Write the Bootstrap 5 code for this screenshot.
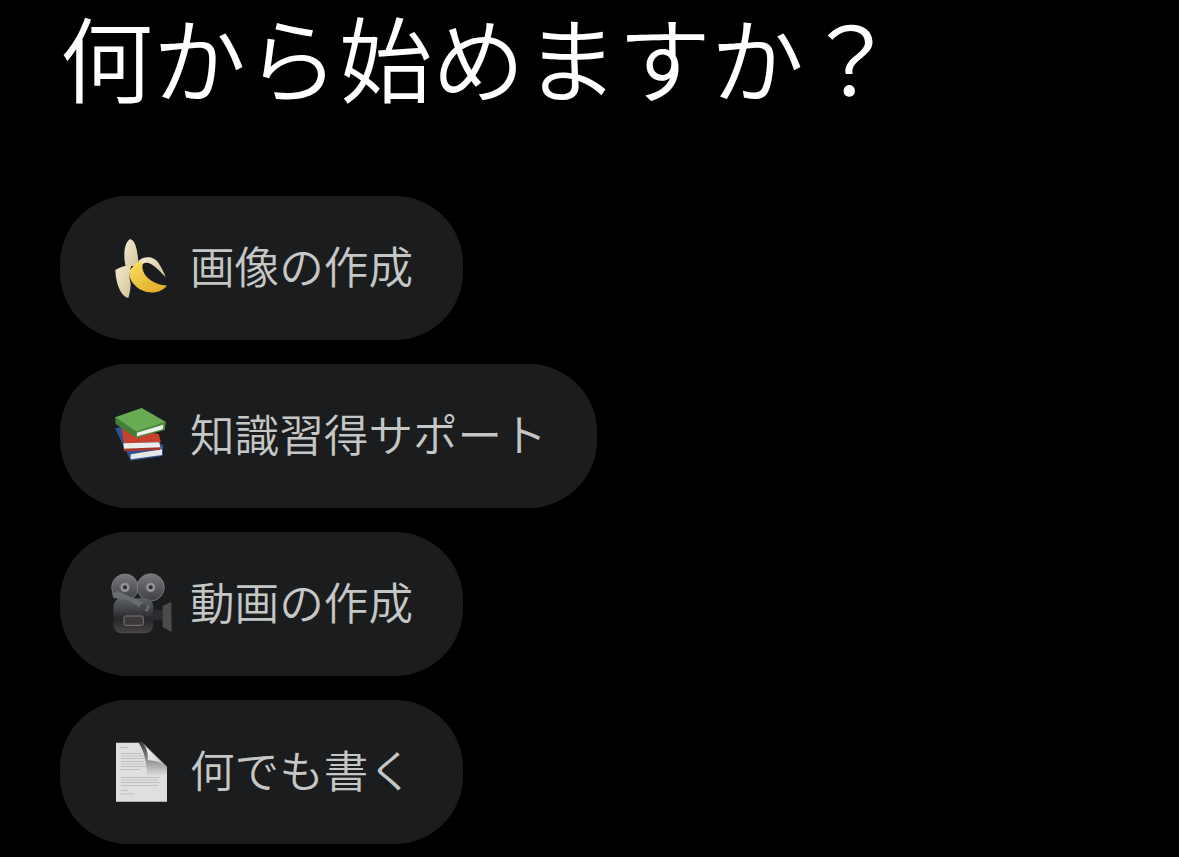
<!DOCTYPE html>
<html lang="ja">
  <head>
    <meta charset="UTF-8" />
    <meta name="viewport" content="width=device-width, initial-scale=1.0" />
    <title>何から始めますか？</title>
    <link
      href="https://cdn.jsdelivr.net/npm/bootstrap@5.3.1/dist/css/bootstrap.min.css"
      rel="stylesheet"
    />
    <style>
      body {
        background: #000;
        font-family: "Noto Sans CJK JP", "Noto Sans", sans-serif;
      }
      .start-page {
        padding-left: 60px;
      }
      .start-title {
        color: #fff;
        font-size: 93px;
        font-weight: 350;
        line-height: 112px;
        margin: 0 0 84px 0;
      }
      .start-list {
        gap: 24px;
      }
      .start-chip {
        height: 144px;
        padding: 0 50px 0 48px;
        gap: 18px;
        background: #1b1c1e;
        color: #c4c7c5;
        border: 0;
        border-radius: 68px;
        font-size: 44.6px;
        font-weight: 350;
        line-height: 1;
      }
      .chip-label {
        margin-bottom: 6px;
      }
      .chip-icon {
        width: 64px;
        height: 64px;
        flex: none;
        filter: blur(0.4px);
      }
    </style>
    <script src="https://cdn.jsdelivr.net/npm/bootstrap@5.3.1/dist/js/bootstrap.bundle.min.js"></script>
  </head>
  <body>
    <div class="start-page">
      <h1 class="start-title">何から始めますか？</h1>
      <div class="start-list d-flex flex-column align-items-start">
        <button type="button" class="start-chip d-inline-flex align-items-center">
          <svg class="chip-icon" viewBox="144 138 192 192" aria-hidden="true">
            <defs>
              <linearGradient id="peelA" x1="0" y1="0" x2="1" y2="1">
                <stop offset="0" stop-color="#f4ecd2" />
                <stop offset="1" stop-color="#d2c296" />
              </linearGradient>
              <linearGradient id="flesh" x1="0" y1="0" x2="0.7" y2="1">
                <stop offset="0" stop-color="#f9e060" />
                <stop offset="1" stop-color="#e3ad2c" />
              </linearGradient>
            </defs>
            <path d="M210 147C224 150 230 172 233 196L237 226L197 230C190 198 191 160 210 147Z" fill="url(#peelA)" />
            <path d="M236 212C254 197 282 198 296 220C306 235 313 250 317 262C304 248 284 226 266 219C254 215 246 224 238 228Z" fill="url(#peelA)" />
            <path d="M222 226C236 210 252 212 247 232C250 262 282 284 321 287C310 303 276 316 246 301C224 290 204 268 208 242Z" fill="url(#flesh)" />
            <path d="M166 240C184 229 204 225 214 227C208 244 206 262 212 280C212 296 209 312 205 324C188 322 168 292 166 240Z" fill="url(#peelA)" />
          </svg>
          <span class="chip-label">画像の作成</span>
        </button>
        <button type="button" class="start-chip d-inline-flex align-items-center">
          <svg class="chip-icon" viewBox="144 132 192 192" aria-hidden="true">
            <path d="M165 205L185 200L310 255L308 288L212 302Z" fill="#33508f" />
            <path d="M212 283L306 268L306 285L212 298Z" fill="#e4e6e8" />
            <path d="M185 205L296 222L303 246L192 250Z" fill="#c9402c" />
            <path d="M190 250L298 247L302 266L192 270Z" fill="#eceded" />
            <path d="M190 266L302 262L300 270L192 274Z" fill="#a8352a" />
            <path d="M165 172L245 144L318 186L228 216Z" fill="#69ab52" />
            <path d="M165 172L228 214L228 234L167 192Z" fill="#427f38" />
            <path d="M228 214L318 186L314 210L228 234Z" fill="#4d8c40" />
            <path d="M231 218L310 194L308 208L231 229Z" fill="#f0f1ee" />
          </svg>
          <span class="chip-label">知識習得サポート</span>
        </button>
        <button type="button" class="start-chip d-inline-flex align-items-center">
          <svg class="chip-icon" viewBox="144 126 192 192" aria-hidden="true">
            <defs>
              <linearGradient id="reel" x1="0" y1="0" x2="0" y2="1">
                <stop offset="0" stop-color="#77797b" />
                <stop offset="1" stop-color="#3d3f42" />
              </linearGradient>
              <linearGradient id="camBody" x1="0" y1="0" x2="0" y2="1">
                <stop offset="0" stop-color="#5f6267" />
                <stop offset="0.6" stop-color="#26272a" />
                <stop offset="1" stop-color="#4a4443" />
              </linearGradient>
            </defs>
            <circle cx="195" cy="172" r="40" fill="url(#reel)" stroke="#8a8c8e" stroke-width="2" />
            <circle cx="272" cy="172" r="41" fill="url(#reel)" stroke="#8a8c8e" stroke-width="2" />
            <circle cx="195" cy="172" r="14" fill="#8f9193" />
            <circle cx="195" cy="172" r="6" fill="#2a2b2d" />
            <circle cx="272" cy="172" r="14" fill="#8f9193" />
            <circle cx="272" cy="172" r="6" fill="#2a2b2d" />
            <rect x="160" y="205" width="120" height="105" rx="24" fill="url(#camBody)" />
            <path d="M156 190L172 182L270 228L262 246L200 208L160 204Z" fill="#6a6c70" />
            <circle cx="250" cy="231" r="10" fill="#46484b" />
            <rect x="192" y="258" width="58" height="28" rx="5" fill="#3c3a3a" stroke="#7c7877" stroke-width="3" />
            <rect x="278" y="240" width="34" height="30" rx="6" fill="#2b2c2e" />
            <path d="M308 228L334 215L335 306L308 292Z" fill="#4b4b4d" />
          </svg>
          <span class="chip-label">動画の作成</span>
        </button>
        <button type="button" class="start-chip d-inline-flex align-items-center">
          <svg class="chip-icon" viewBox="144 129 192 192" aria-hidden="true">
            <defs>
              <linearGradient id="foldShade" x1="0" y1="0" x2="0" y2="1">
                <stop offset="0" stop-color="#3a3a3a" />
                <stop offset="1" stop-color="#dedede" />
              </linearGradient>
              <linearGradient id="foldEdge" x1="0" y1="0" x2="1" y2="1">
                <stop offset="0" stop-color="#fdfdfd" />
                <stop offset="1" stop-color="#c9c9c9" />
              </linearGradient>
            </defs>
            <path d="M168 137H248L321 210V314H168Z" fill="#dfdfdf" />
            <path d="M236 137H250L321 210V228C312 240 285 240 262 232C258 200 255 165 236 137Z" fill="url(#foldShade)" />
            <path d="M250 141L316 208C300 190 275 192 263 190C265 172 262 155 250 141Z" fill="url(#foldEdge)" />
            <g fill="#b0b0b0">
              <rect x="182" y="151" width="24" height="2" />
              <rect x="182" y="168" width="62" height="2" />
              <rect x="182" y="176" width="68" height="2" />
              <rect x="182" y="184" width="72" height="2" />
              <rect x="182" y="192" width="70" height="2" />
              <rect x="182" y="200" width="74" height="2" />
              <rect x="182" y="208" width="76" height="2" />
              <rect x="182" y="216" width="60" height="2" />
              <rect x="182" y="240" width="118" height="2" />
              <rect x="182" y="248" width="112" height="2" />
              <rect x="182" y="256" width="118" height="2" />
              <rect x="182" y="264" width="112" height="2" />
              <rect x="182" y="280" width="22" height="2" />
              <rect x="182" y="290" width="40" height="2" />
            </g>
          </svg>
          <span class="chip-label">何でも書く</span>
        </button>
      </div>
    </div>
  </body>
</html>
